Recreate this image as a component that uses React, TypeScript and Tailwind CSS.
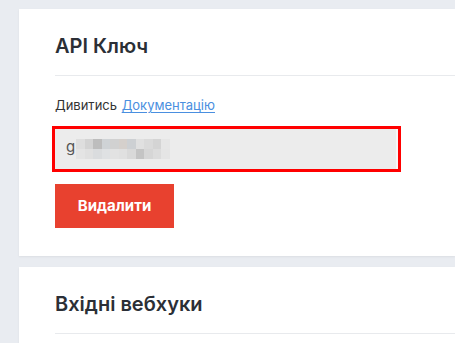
const ROW_A = ['#dedede', '#d3d3d3', '#bdbdbd', '#cfd3d6', '#d1d1d1', '#d5d0cc', '#cdd0d3', '#e0e0e0', '#dadada', '#d4d4d4', '#e6e6e6'];
const ROW_B = ['#e4e4e4', '#e0e0e0', '#dadcde', '#dfe1e3', '#e2e2e2', '#e0e0e0', '#d9d9d9', '#c4c4c4', '#d6d6d6', '#dcdcdc', '#e5e5e5'];

function Card({ title, children }: { title: string; children?: React.ReactNode }) {
  return (
    <div className="shrink-0 bg-white shadow-[0_1px_2px_rgba(0,0,0,0.06)] pl-[36px] pt-[23px] pb-[28px]">
      <h2 className="text-[20px] leading-[28px] font-semibold text-[#2b2f36]">{title}</h2>
      <div className="h-px bg-[#e8eaed] mt-[15px]" />
      {children}
    </div>
  );
}

export default function App() {
  return (
    <div className="h-screen bg-[#e9ecf1] pt-[9px] pl-[19px] flex flex-col gap-[11px] font-['Inter','Liberation_Sans',sans-serif] overflow-hidden">
      <Card title="API Ключ">
        <div className="mt-[20px] text-[13px] leading-[18px] text-[#333]">
          Дивитись{' '}
          <a href="#" className="ml-px text-[#4a8fe0] underline underline-offset-2">Документацію</a>
        </div>
        <div className="mt-[12px] -ml-[3px] w-[349px] h-[46px] border-[3px] border-[#ff0000]">
          <div className="h-full bg-[#ececec] border-r-2 border-[#f7f7f7] flex items-center pl-[11px]">
            <span className="text-[15px] text-[#555] mr-px -mt-[3px]">g</span>
            <div className="flex flex-col">
              <div className="flex">
                {ROW_A.map((c, i) => (
                  <div key={i} className="w-[8.5px] h-[10px]" style={{ background: c }} />
                ))}
              </div>
              <div className="flex">
                {ROW_B.map((c, i) => (
                  <div key={i} className="w-[8.5px] h-[10px]" style={{ background: c }} />
                ))}
              </div>
            </div>
          </div>
        </div>
        <button className="block mt-[12px] w-[119px] h-[44px] bg-[#e8412f] text-white text-[15px] font-bold">
          Видалити
        </button>
      </Card>
      <Card title="Вхідні вебхуки">
        <div className="h-[40px]" />
      </Card>
    </div>
  );
}
